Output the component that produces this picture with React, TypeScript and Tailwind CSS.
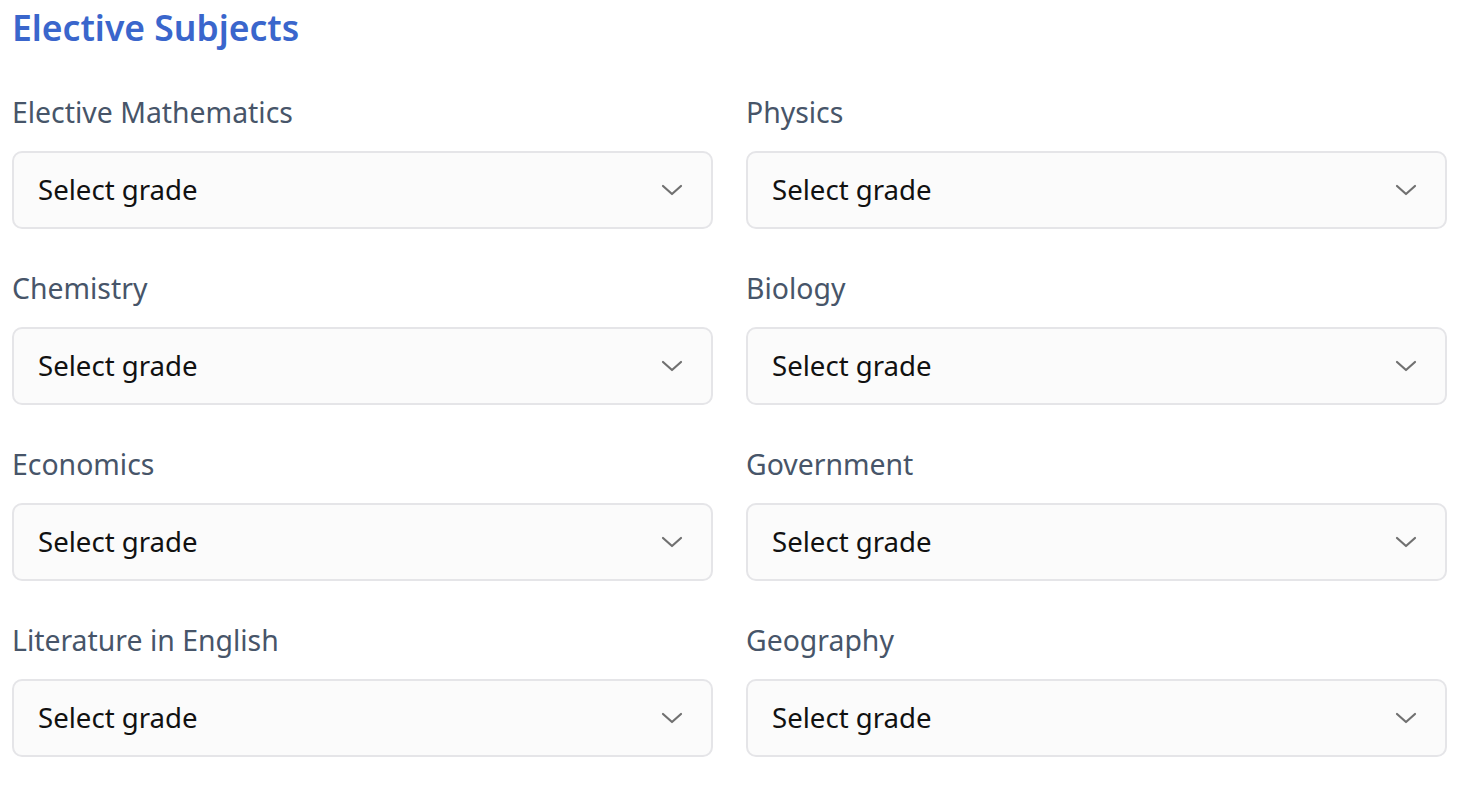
import React from "react";

const subjects = [
  "Elective Mathematics",
  "Physics",
  "Chemistry",
  "Biology",
  "Economics",
  "Government",
  "Literature in English",
  "Geography",
];

function Chevron() {
  return (
    <svg width="22" height="12" viewBox="0 0 22 12" fill="none" className="shrink-0">
      <path d="M2 2l9 8 9-8" stroke="#707070" strokeWidth="2.2" strokeLinecap="round" strokeLinejoin="round" />
    </svg>
  );
}

export default function App() {
  return (
    <div className="min-h-screen bg-white pl-[12px] pr-[27px] pt-[2px]" style={{ fontFamily: '"Noto Sans", sans-serif' }}>
      <h2 className="text-[35.5px] font-semibold leading-[50px] text-[#3a66cc]">Elective Subjects</h2>
      <div className="mt-[42px] grid grid-cols-2 gap-x-[33px] gap-y-[41px]">
        {subjects.map((s) => (
          <div key={s} className="flex flex-col">
            <label className="text-[28.4px] leading-[36px] text-[#475569]">{s}</label>
            <div className="mt-[21px] flex h-[78px] items-center justify-between rounded-[10px] border-2 border-[#e5e5e8] bg-[#fbfbfb] pl-[24px] pr-[28px]">
              <span className="text-[27.6px] text-[#111111]">Select grade</span>
              <Chevron />
            </div>
          </div>
        ))}
      </div>
    </div>
  );
}
